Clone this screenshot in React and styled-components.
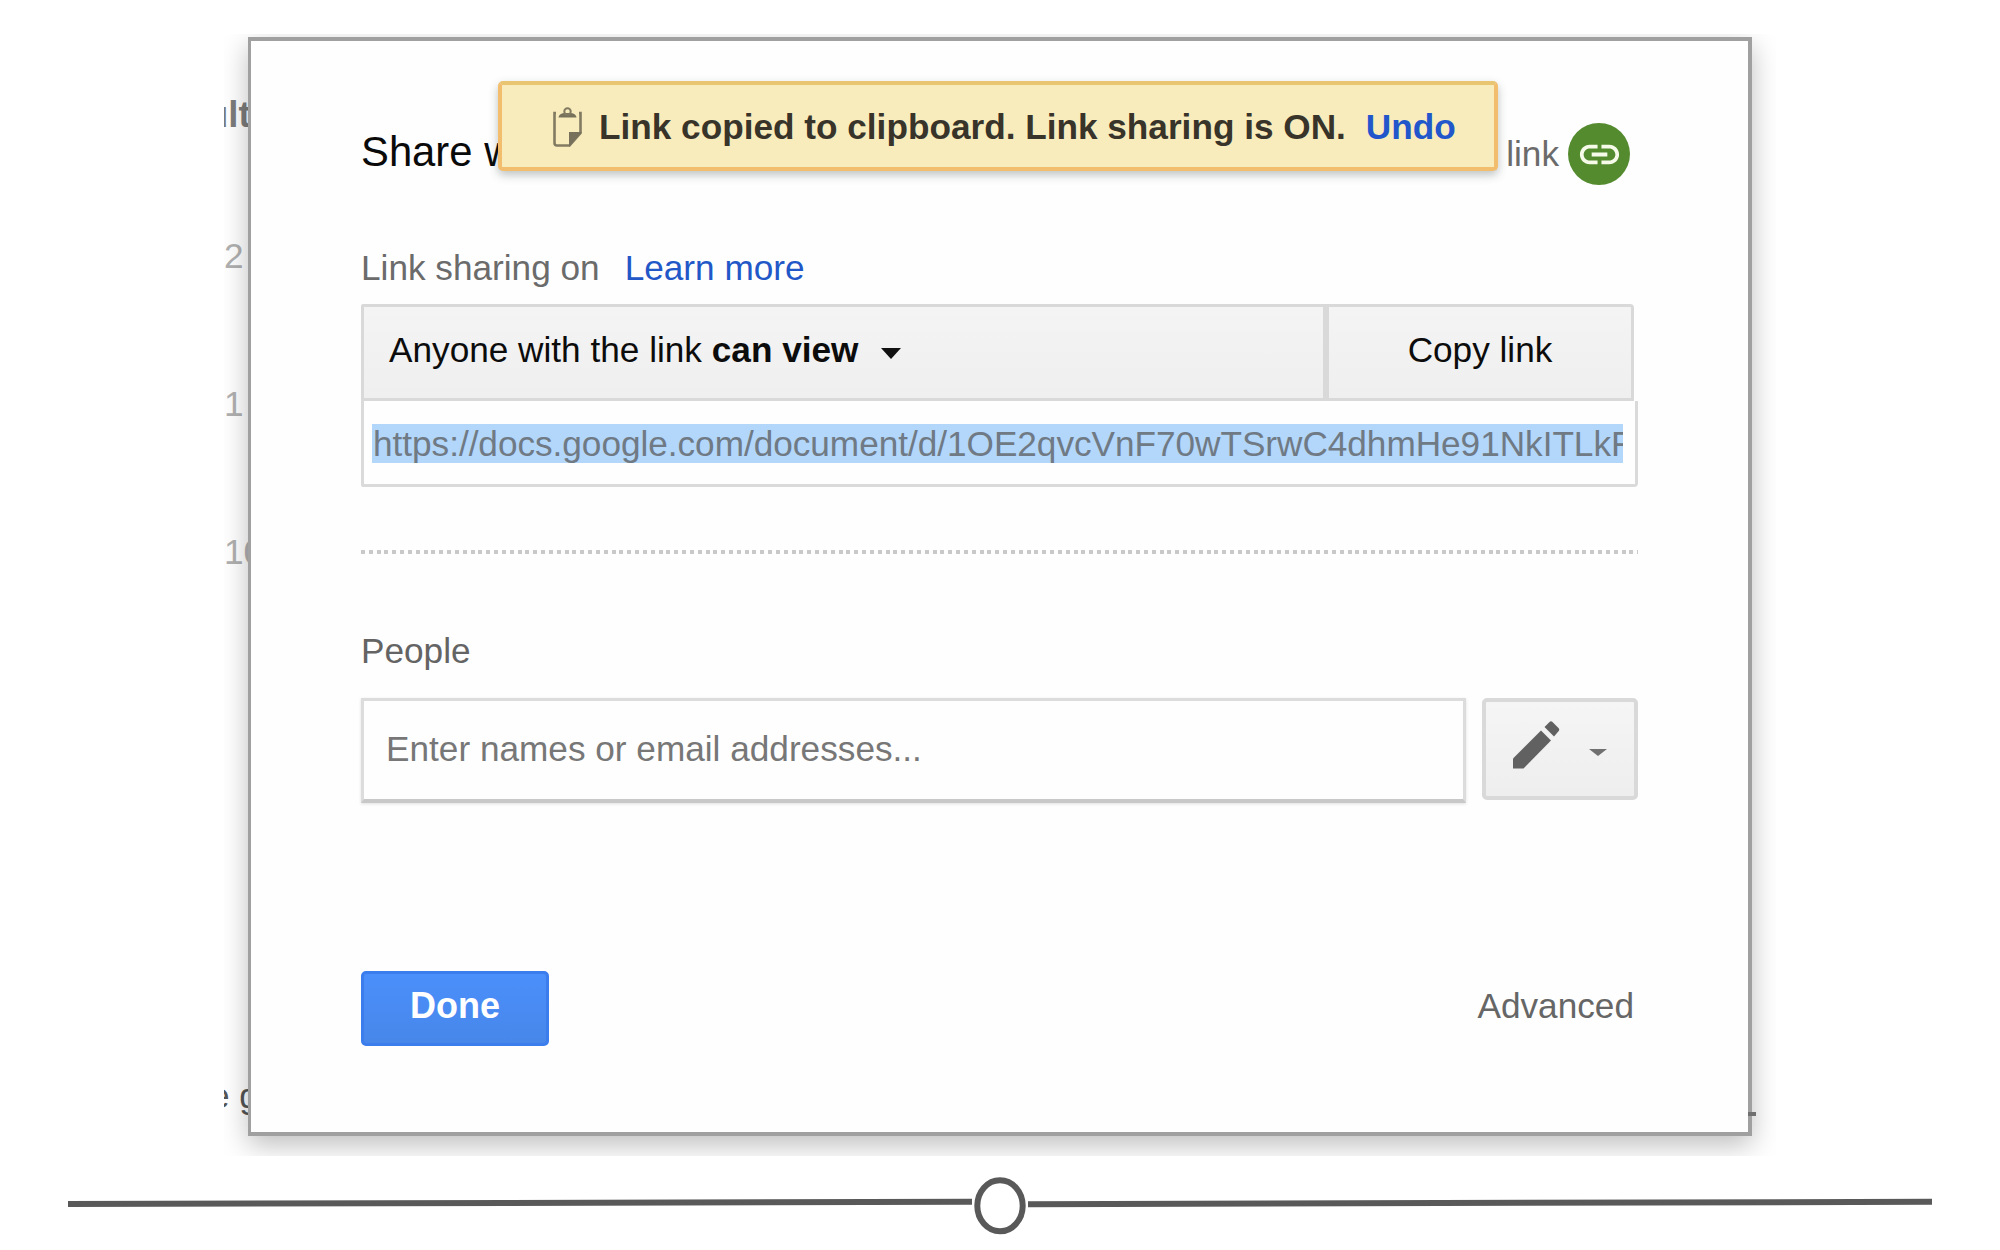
import React from "react";
import styled, { createGlobalStyle } from "styled-components";

const Global = createGlobalStyle`
  * { box-sizing: border-box; }
  html, body { margin: 0; background: #fff; }
  body { font-family: "Liberation Sans", Arial, sans-serif; font-size: 35.2px; line-height: 40px; }
`;

const Slide = styled.main`
  width: 2000px;
  height: 1250px;
  padding-top: 34px;
  background: #fff;
  overflow: hidden;
`;

const Capture = styled.section`
  position: relative;
  width: 1552px;
  height: 1122px;
  margin-left: 224px;
  padding: 3px 24px 0;
  overflow: hidden;
`;

const Behind = styled.span`
  position: absolute;
  left: ${(p) => p.$x}px;
  top: ${(p) => p.$y}px;
  color: ${(p) => p.$tone};
  font-weight: ${(p) => (p.$bold ? 700 : 400)};
  font-size: ${(p) => p.$size || 35.2}px;
  white-space: nowrap;
`;

const Tick = styled.i`
  position: absolute;
  left: ${(p) => p.$x}px;
  top: ${(p) => p.$y}px;
  width: ${(p) => p.$w}px;
  height: ${(p) => p.$h}px;
  background: ${(p) => p.$tone};
`;

const Dialog = styled.div`
  position: relative;
  display: flex;
  flex-direction: column;
  width: 1504px;
  height: 1099px;
  padding: 0 109px 0 110px;
  background: #fefefe;
  border: 4px solid #a0a0a0;
  border-left-width: 3px;
  box-shadow: 0 9px 26px rgba(0, 0, 0, 0.26);
`;

const Toast = styled.div`
  position: absolute;
  left: 247px;
  top: 40px;
  display: flex;
  align-items: center;
  width: 1000px;
  height: 90px;
  padding: 2px 0 0 50px;
  color: #38342a;
  font-weight: 700;
  background: #f8ecbd;
  border: 4px solid #f2bd6d;
  border-top-color: #e9c471;
  border-radius: 5px;
  box-shadow: 0 4px 10px rgba(40, 60, 50, 0.3);
  white-space: nowrap;
`;

const ToastText = styled.span`
  margin-left: 16px;
`;

const Undo = styled.a`
  margin-left: 20px;
  color: #2257cc;
`;

const Header = styled.header`
  display: flex;
  align-items: center;
  justify-content: space-between;
  height: 62px;
  margin-top: 82px;
  padding-right: 9px;
`;

const Title = styled.h1`
  margin: 0 0 4px;
  color: #0a0a0a;
  font-size: 41.8px;
  font-weight: 400;
  line-height: 48px;
`;

const GetLink = styled.div`
  display: flex;
  align-items: center;
  gap: 9px;
  color: #6b6b6b;
`;

const LinkBadge = styled.span`
  display: flex;
  align-items: center;
  justify-content: center;
  width: 62px;
  height: 62px;
  border-radius: 50%;
  background: #558b2f;
`;

const StatusRow = styled.div`
  display: flex;
  gap: 25px;
  margin-top: 63px;
  color: #6b6b6b;
`;

const LearnMore = styled.a`
  color: #2257c8;
`;

const SharingBar = styled.div`
  display: flex;
  width: 1273px;
  height: 97px;
  margin-top: 16px;
`;

const BarButton = styled.button`
  display: flex;
  align-items: center;
  justify-content: ${(p) => (p.$center ? "center" : "flex-start")};
  width: ${(p) => p.$w}px;
  padding: 0 0 6px ${(p) => p.$pad || 0}px;
  color: #0c0c0c;
  font: inherit;
  white-space: pre;
  background: linear-gradient(#f4f4f4, #efefef);
  border: 3px solid #d9d9d9;
  border-radius: ${(p) => (p.$center ? "0 4px 0 0" : "2px 0 0 0")};
`;

const Caret = styled.i`
  width: 0;
  height: 0;
  border: ${(p) => p.$half}px solid transparent;
  border-top: ${(p) => p.$h}px solid ${(p) => p.$tone};
  border-bottom: 0;
`;

const MenuCaret = styled(Caret)`
  margin: 8px 0 0 23px;
`;

const UrlField = styled.div`
  width: 1277px;
  height: 86px;
  padding: 23px 12px 0 8px;
  background: #fefefe;
  border: 3px solid #dadada;
  border-top: 0;
  border-radius: 0 0 4px 2px;
`;

const Selected = styled.div`
  height: 39px;
  overflow: hidden;
  color: #6f7a84;
  line-height: 40px;
  letter-spacing: -0.03px;
  text-indent: 1px;
  white-space: nowrap;
  background: #b3d6fb;
`;

const Divider = styled.div`
  width: 1277px;
  height: 4px;
  margin-top: 63px;
  background: repeating-linear-gradient(90deg, #c9c9c9 0 4px, #fefefe 4px 7.83px);
`;

const Label = styled.label`
  margin-top: 77px;
  color: #646464;
`;

const InviteRow = styled.div`
  display: flex;
  align-items: flex-start;
  gap: 16px;
  margin-top: 27px;
`;

const InviteField = styled.div`
  width: 1105px;
  height: 105px;
  padding: 28px 0 0 22px;
  color: #777;
  background: #fefefe;
  border: 3px solid #dcdcdc;
  border-bottom: 4px solid #c8c8c8;
  box-shadow: 0 1px 3px rgba(0, 0, 0, 0.12);
`;

const RoleButton = styled.button`
  display: flex;
  align-items: flex-start;
  width: 156px;
  height: 102px;
  padding: 19px 0 0 27px;
  background: linear-gradient(#f5f5f5, #eeeeee);
  border: 4px solid #d9d9d9;
  border-radius: 5px;
`;

const RoleCaret = styled(Caret)`
  margin: 28px 0 0 29px;
`;

const Footer = styled.footer`
  display: flex;
  justify-content: space-between;
  margin-top: 168px;
  width: 1273px;
`;

const DoneButton = styled.button`
  width: 188px;
  height: 75px;
  padding: 0 0 5px;
  color: #fff;
  font: 700 36px/40px "Liberation Sans", Arial, sans-serif;
  background: linear-gradient(#4b8ffb, #4787ea);
  border: 3px solid #3b7ded;
  border-radius: 5px;
`;

const Advanced = styled.a`
  margin-top: 15px;
  color: #666;
`;

const Rule = styled.svg`
  display: block;
`;

const ClipboardIcon = () => (
  <svg width="31" height="41" viewBox="0 0 31 41" fill="none">
    <path d="M4 6H2.500V36Q2.500 38.500 5 38.500H17.500L28.500 26V6H27" stroke="#827b62" strokeWidth="2.600" />
    <path d="M17 40V25H30Z" fill="#77715c" />
    <path d="M6.500 10.500Q7 6.500 12 6H19Q24 6.500 24.500 10.500Z" fill="#77715c" />
    <circle cx="15.500" cy="4.500" r="3.200" stroke="#827b62" strokeWidth="2" />
  </svg>
);

const LinkIcon = () => (
  <svg width="47" height="47" viewBox="0 0 24 24" fill="#f6fbe9">
    <path d="M3.900 12c0-1.710 1.390-3.100 3.100-3.100h4V7H7c-2.760 0-5 2.240-5 5s2.240 5 5 5h4v-1.900H7c-1.710 0-3.100-1.390-3.100-3.100zM8 13h8v-2H8v2zm9-6h-4v1.900h4c1.710 0 3.100 1.390 3.100 3.100s-1.390 3.100-3.100 3.100h-4V17h4c2.760 0 5-2.240 5-5s-2.240-5-5-5z" />
  </svg>
);

const PencilIcon = () => (
  <svg width="47" height="48" viewBox="0 0 47 48" fill="#616161">
    <path d="M0 37.500L28 9.500L38 19.500L10.500 47.500H0Z" />
    <path d="M31.500 6L36.500 1Q38 -0.300 39.500 1L45.500 7Q47 8.700 45.500 10.300L41 15.500Z" />
  </svg>
);

export default function App() {
  return (
    <>
      <Global />
      <Slide>
        <Capture>
          <Behind $x={-18} $y={61} $tone="#7c7c7c" $bold $size={36.5}>ult</Behind>
          <Behind $x={0} $y={202} $tone="#b0b0b0">2</Behind>
          <Behind $x={0} $y={350} $tone="#b0b0b0">1</Behind>
          <Behind $x={0} $y={498} $tone="#b0b0b0">10</Behind>
          <Behind $x={-14} $y={1042} $tone="#555">e g</Behind>
          <Dialog>
            <Header>
              <Title>Share w</Title>
              <GetLink>
                link
                <LinkBadge><LinkIcon /></LinkBadge>
              </GetLink>
            </Header>
            <StatusRow>
              <span>Link sharing on</span>
              <LearnMore>Learn more</LearnMore>
            </StatusRow>
            <SharingBar>
              <BarButton $w={965} $pad={25}>
                Anyone with the link <b>can view</b>
                <MenuCaret $half={10} $h={11} $tone="#111" />
              </BarButton>
              <BarButton $w={308} $center>Copy link</BarButton>
            </SharingBar>
            <UrlField>
              <Selected>https://docs.google.com/document/d/1OE2qvcVnF70wTSrwC4dhmHe91NkITLkF</Selected>
            </UrlField>
            <Divider />
            <Label>People</Label>
            <InviteRow>
              <InviteField>Enter names or email addresses...</InviteField>
              <RoleButton>
                <PencilIcon />
                <RoleCaret $half={9} $h={7} $tone="#707070" />
              </RoleButton>
            </InviteRow>
            <Footer>
              <DoneButton>Done</DoneButton>
              <Advanced>Advanced</Advanced>
            </Footer>
            <Toast>
              <ClipboardIcon />
              <ToastText>Link copied to clipboard. Link sharing is ON.</ToastText>
              <Undo>Undo</Undo>
            </Toast>
          </Dialog>
          <Tick $x={1524} $y={1078} $w={8} $h={4} $tone="#707070" />
        </Capture>
        <Rule width="2000" height="94" viewBox="0 1156 2000 94" fill="none" stroke="#595959" strokeWidth="6">
          <path d="M68 1204L972 1201.700" />
          <path d="M1028 1204.300L1932 1201.700" />
          <ellipse cx="1000" cy="1205.800" rx="22.700" ry="25.500" />
        </Rule>
      </Slide>
    </>
  );
}
